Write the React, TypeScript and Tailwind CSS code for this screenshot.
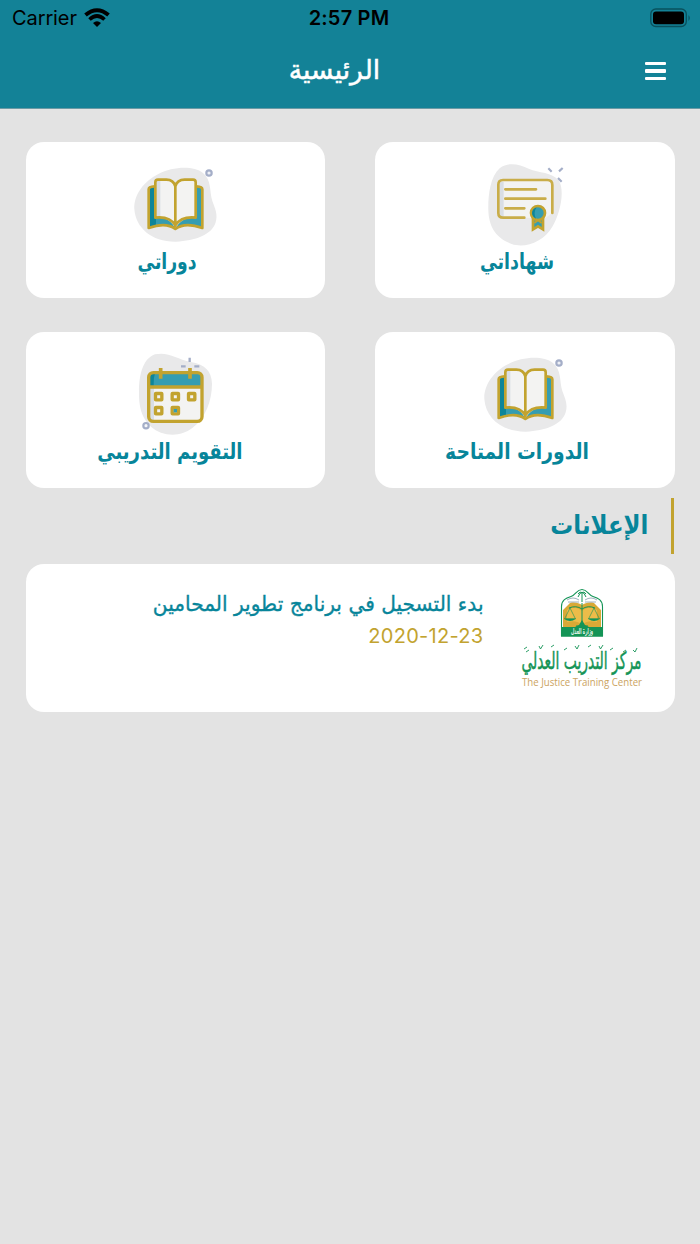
import type { ReactNode } from "react";

function BookIcon() {
  return (
    <svg viewBox="27 15 276 264" className="h-[88px] w-[92px]" fill="none">
      <path d="M43 162C41 120 72 78 115 57C158 35 220 31 249 54C275 75 268 108 277 138C286 162 294 179 287 202C277 239 225 258 168 260C96 261 47 219 43 162Z" fill="#e9e9ea" />
      <circle cx="267" cy="54" r="8" fill="#eef0f6" stroke="#a4aec8" strokeWidth="6.5" />
      <path d="M86 96L105 92V188C133 185 155 198 166 222C144 205 119 207 86 219Z" fill="#0d8599" />
      <path d="M247 96L228 92V188C200 185 177 198 166 222C188 205 214 207 247 219Z" fill="#359db1" />
      <path d="M125 190C145 193 157 204 166 222C142 202 126 209 108 212V190Z" fill="#359db1" />
      <path d="M106 74H139C155 74 163 83 166 94C169 83 178 74 194 74H227V188C199 185 178 193 166 211C155 193 133 185 106 188Z" fill="#f3f3f2" />
      <path d="M106 76H121V188H106Z" fill="#d9dee5" />
      <g stroke="#c2a32f" strokeWidth="8" strokeLinejoin="round">
        <path d="M166 94C163 83 155 74 139 74H114Q106 74 106 82V188C133 185 155 193 166 211C178 193 199 185 227 188V82Q227 74 219 74H194C178 74 169 83 166 94V218" />
        <path d="M104 94Q86 95 86 103V219C119 207 144 205 166 222C188 205 214 207 247 219V103Q247 95 229 94" />
      </g>
    </svg>
  );
}

function CertificateIcon() {
  return (
    <svg viewBox="27 15 276 264" className="h-[88px] w-[92px]" fill="none">
      <path d="M55 165C54 127 59 67 89 40C116 19 149 29 176 41C207 54 246 51 266 76C286 107 270 177 247 215C221 260 166 281 125 267C75 249 56 211 55 165Z" fill="#e9e9ea" />
      <g stroke="#a4aec8" strokeWidth="6.5">
        <path d="M235 40L245 50M278 39L267 49M264 69L275 80" />
      </g>
      <path d="M165 188H98Q85 188 85 175V89Q85 75 99 75H232Q247 75 247 90V174L225 190Z" fill="#f3f3f2" />
      <path d="M88 80H101V185H93Q88 184 88 178Z" fill="#d9dee5" />
      <g stroke="#c9ad49" strokeWidth="8" strokeLinecap="round">
        <path d="M163 188H99Q85 188 85 174V89Q85 75 99 75H232Q247 75 247 90V174" />
        <path d="M106 103H198M106 131H226M106 160H163" />
      </g>
      <path d="M189 188H219V223L204 214L189 223Z" fill="#359db1" stroke="#c2a32f" strokeWidth="8" />
      <path d="M193 204L204 196L215 204" stroke="#c2a32f" strokeWidth="5" />
      <circle cx="204" cy="174" r="21" fill="#359db1" stroke="#c2a32f" strokeWidth="8" />
      <path d="M200 157C181 163 183 185 198 191C192 180 192 168 200 157Z" fill="#0d8599" />
    </svg>
  );
}

const DAYS = [
  [206, 170],
  [256, 170],
  [305, 170],
  [206, 212],
  [256, 212],
];

function CalendarIcon() {
  return (
    <svg viewBox="117 30 276 264" className="h-[88px] w-[92px]" fill="none">
      <path d="M147 155C147 106 158 56 195 43C235 34 260 57 302 66C344 73 365 93 366 131C366 180 347 235 307 264C268 294 215 288 183 260C153 233 146 195 147 155Z" fill="#e9e9ea" />
      <path d="M299 53V66M273 79H287M313 79H328" stroke="#a4aec8" strokeWidth="7" />
      <circle cx="168" cy="257" r="8" fill="#f5f6f9" stroke="#a4aec8" strokeWidth="6.5" />
      <rect x="176" y="98" width="160" height="146" rx="14" fill="#f3f3f2" />
      <path d="M180 140H192V241Q180 242 180 233Z" fill="#d9dee5" />
      <path d="M177 140V110Q177 98 188 98H324Q336 98 336 110V140Z" fill="#359db1" />
      <path d="M180 138V110Q180 101 196 101Q191 105 191 138Z" fill="#0d8599" />
      <rect x="176" y="98" width="160" height="146" rx="14" stroke="#c2a32f" strokeWidth="10" />
      <path d="M176 141H336M212 84V116M300 84V116" stroke="#c2a32f" strokeWidth="11" />
      {DAYS.map(([x, y]) => (
        <rect key={`${x}-${y}`} x={x - 9.5} y={y - 9.5} width="19" height="19" rx="1" fill="#f3f3f2" stroke="#c2a32f" strokeWidth="10" />
      ))}
      <rect x="251" y="207" width="10" height="10" fill="#359db1" />
    </svg>
  );
}

function JusticeLogo() {
  return (
    <svg viewBox="0 0 145 115" className="h-[115px] w-[145px] overflow-visible [direction:ltr]" fill="none">
      <path d="M51.5 56V26.5C51.5 20 56 18 61 16.5C66 15 66.500 9.500 72 9.500C77.500 9.500 78 15 83 16.500C88 18 92.500 20 92.500 26.500V56Z" fill="#fff" stroke="#149456" strokeWidth="1.1" />
      <path d="M53 30L60 23C65 22 69 23 72 25C75 23 79 22 84 23L91 30V47H53Z" fill="#d9a936" />
      <path d="M57 30C63 26 69 28 72 31C75 28 81 26 87 30V42C80 40 75 42 72 45C69 42 64 40 57 42Z" fill="#edbc49" />
      <path d="M51 47H93V56.500H51Z" fill="#149456" />
      <g stroke="#149456" strokeWidth="1">
        <path d="M72 12V22M68 14Q70 11 72 12.500Q74 11 76 14M68 17Q70 12 72 12.500Q74 12 76 17" />
        <path d="M72 23V46M59 28Q66 25 72 29Q78 25 85 28M66 46H78" />
        <path d="M60 28L54.500 39H65.500ZM84 28L78.500 39H89.500Z" strokeWidth=".6" />
      </g>
      <path d="M54 38.500H66Q60 43.500 54 38.500ZM78 38.500H90Q84 43.500 78 38.500ZM69 45L72 40L75 45L79 47H65Z" fill="#149456" />
      <path d="M57 20Q63 16 69 20M75 20Q81 16 87 20M58 22H69M75 22H86" stroke="#879dac" strokeWidth=".8" />
      <text x="72" y="53.500" textAnchor="middle" direction="rtl" textLength="22" lengthAdjust="spacingAndGlyphs" fill="#fff" stroke="#fff" strokeWidth=".2" fontSize="8" fontFamily="DejaVu Sans, sans-serif">وزارة العدل</text>
      <text x="71.500" y="88.500" textAnchor="middle" direction="rtl" textLength="120" lengthAdjust="spacingAndGlyphs" fill="#149456" stroke="#149456" strokeWidth=".5" fontSize="24" fontFamily="DejaVu Sans, sans-serif">مركز التدريب العدلي</text>
      {/* calligraphy marks over the wordmark */}
      <path d="M14 69L17 67M16 72L19 70M29 66L30.500 69L33 65M41 67L44 65M54 70L57 68M65 66L67 69L69 65M78 67L81 65M89 66L90.500 69L93 65M100 70L103 68M113 72L116 70M123 70L125 72L127 68" stroke="#149456" strokeWidth=".9" />
      <text x="12" y="105.800" textLength="120" lengthAdjust="spacingAndGlyphs" fill="#cba361" fontSize="10.500" fontFamily="Open Sans, Noto Sans, sans-serif">The Justice Training Center</text>
    </svg>
  );
}

function StatusBar() {
  return (
    <div dir="ltr" className="grid h-9 grid-cols-3 items-center pl-3 pr-[9px] font-['Inter','Liberation_Sans',sans-serif] text-[20px] text-black">
      <div className="flex items-center gap-[7px]">
        <span className="tracking-[-0.1px]">Carrier</span>
        <svg viewBox="0 0 26 20" className="h-5 w-[26px]" fill="none" stroke="currentColor">
          <path d="M1.500 7Q13-2.500 24.500 7" strokeWidth="4" />
          <path d="M5.500 11.500Q13 4.500 20.500 11.500" strokeWidth="3.600" />
          <path d="M9 15Q13 11.500 17 15L13 19Z" fill="currentColor" stroke="none" />
        </svg>
      </div>
      <span className="pr-[5px] text-center font-semibold tracking-[0.2px]">2:57 PM</span>
      <svg viewBox="0 0 41 20" className="h-5 w-[41px] justify-self-end">
        <rect x=".8" y="1" width="35.500" height="17.500" rx="5" fill="none" stroke="#09515d" strokeWidth="1.300" />
        <rect x="3" y="3.500" width="31" height="12.700" rx="3" />
        <path d="M38.500 7V13Q41 10 38.500 7Z" fill="#09515d" />
      </svg>
    </div>
  );
}

interface TileProps {
  icon: ReactNode;
  label: string;
  labelClass: string;
}

function Tile({ icon, label, labelClass }: TileProps) {
  return (
    <button className="flex h-[156px] flex-col items-center rounded-[18px] bg-white pt-[18px]">
      {icon}
      <span className={`block whitespace-nowrap text-[22px] font-bold leading-[27px] text-[#07859a] ${labelClass}`}>{label}</span>
    </button>
  );
}

export default function App() {
  return (
    <div dir="rtl" className="min-h-[1244px] w-[700px] bg-[#e3e3e3] font-['DejaVu_Sans',sans-serif]">
      <header className="h-[108.500px] border-b border-[#6b9aa5] bg-[#138297]">
        <StatusBar />
        <div className="flex h-[70px] items-center px-[34px]">
          <button aria-label="القائمة" className="flex w-[21px] flex-col gap-[4px]">
            <span className="h-[3.500px] rounded-[1px] bg-white" />
            <span className="h-[3.500px] rounded-[1px] bg-white" />
            <span className="h-[3.500px] rounded-[1px] bg-white" />
          </button>
          <h1 className="flex-1 pb-0.5 pl-[5px] pr-[15px] text-center text-[26.500px] text-white [-webkit-text-stroke:0.5px_white]">الرئيسية</h1>
        </div>
      </header>

      <main className="px-[25.500px] pt-[33.500px]">
        <div className="grid grid-cols-2 gap-x-[50px] gap-y-[34px]">
          <Tile icon={<CertificateIcon />} label="شهاداتي" labelClass="pr-5 scale-x-[0.79] [direction:ltr]" />
          <Tile icon={<BookIcon />} label="دوراتي" labelClass="pr-5 scale-x-[0.78] [direction:ltr]" />
          <Tile icon={<BookIcon />} label="الدورات المتاحة" labelClass="pr-[19px] scale-x-[0.85]" />
          <Tile icon={<CalendarIcon />} label="التقويم التدريبي" labelClass="pr-[14px] scale-x-[0.82]" />
        </div>

        <h2 className="mr-[0.500px] mt-[10px] flex h-14 items-center border-r-[3.500px] border-[#c2a32f] pr-[23px] pb-0.5 text-[26px] font-bold text-[#07859a]">
          <span className="origin-right scale-x-[0.88]">الإعلانات</span>
        </h2>

        <article className="mt-[10px] flex h-[148px] rounded-[18px] bg-white pr-5 pt-4">
          <JusticeLogo />
          <div className="mr-[26px] pt-2">
            <p className="origin-right scale-x-[0.96] whitespace-nowrap text-[21px] leading-8 text-[#07859a] [-webkit-text-stroke:0.35px_#07859a]">بدء التسجيل في برنامج تطوير المحامين</p>
            <p dir="ltr" className="text-right font-['Inter','Liberation_Sans',sans-serif] text-[20px] leading-8 tracking-[0.3px] text-[#c2a32f]">2020-12-23</p>
          </div>
        </article>
      </main>
    </div>
  );
}
